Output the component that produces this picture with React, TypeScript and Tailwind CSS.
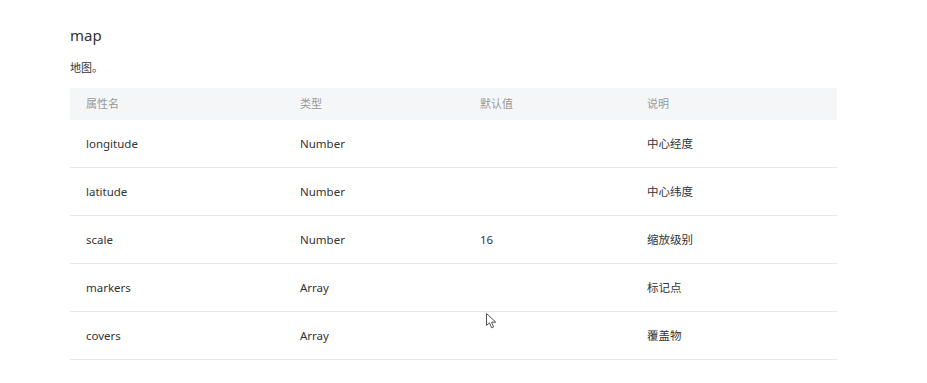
const rows = [
  { name: "longitude", type: "Number", def: "", desc: "中心经度" },
  { name: "latitude", type: "Number", def: "", desc: "中心纬度" },
  { name: "scale", type: "Number", def: "16", desc: "缩放级别" },
  { name: "markers", type: "Array", def: "", desc: "标记点" },
  { name: "covers", type: "Array", def: "", desc: "覆盖物" },
];

const font = { fontFamily: '"Noto Sans", "Noto Sans CJK SC", sans-serif' };

export default function App() {
  return (
    <div className="relative w-[927px] h-[383px] bg-white overflow-hidden" style={font}>
      <div className="pl-[70px] pt-[24px]">
        <h2 className="text-[15px] leading-[22px] text-[#333]">map</h2>
        <p className="mt-[14px] text-[11px] leading-[16px] text-[#333]">地图。</p>

        <div className="mt-[12px] w-[767px]">
          {/* 表头 */}
          <div className="flex h-[32px] items-center bg-[#f5f6f8] text-[11px] text-[#999]">
            <div className="w-[230px] pl-[16px]">属性名</div>
            <div className="w-[180px]">类型</div>
            <div className="w-[167px]">默认值</div>
            <div className="flex-1">说明</div>
          </div>
          {rows.map((row) => (
            <div
              key={row.name}
              className="flex h-[48px] items-center border-b border-[#e8e8e8] text-[11.5px] text-[#333]"
            >
              <div className="w-[230px] pl-[16px]">{row.name}</div>
              <div className="w-[180px]">{row.type}</div>
              <div className="w-[167px]">{row.def}</div>
              <div className="flex-1">{row.desc}</div>
            </div>
          ))}
        </div>
      </div>

      {/* 鼠标指针 */}
      <svg
        className="absolute left-[486px] top-[313px]"
        width="12"
        height="17"
        viewBox="0 0 12 17"
      >
        <path
          d="M0.5 0.5 L0.5 12.5 L3.5 9.8 L5.6 14.8 L7.6 13.9 L5.6 9.2 L9.8 9.2 Z"
          fill="#fff"
          stroke="#555"
          strokeWidth="1"
          strokeLinejoin="round"
        />
      </svg>
    </div>
  );
}
